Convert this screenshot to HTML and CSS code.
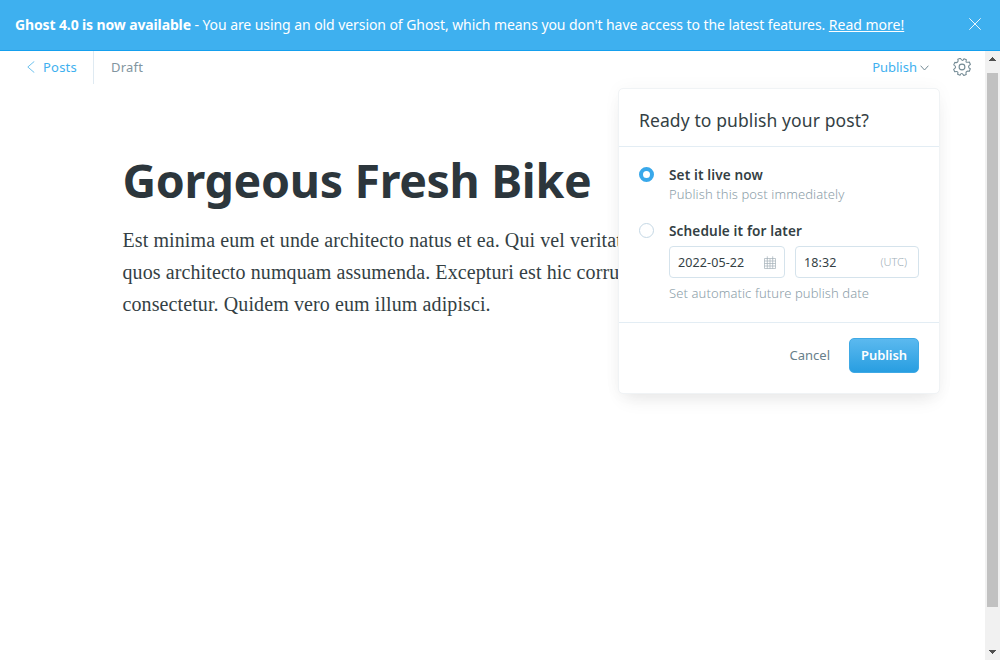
FILE: index.html
```html
<!DOCTYPE html>
<html lang="en">
<head>
<meta charset="utf-8">
<title>Editor</title>
<link rel="stylesheet" href="styles.css">
</head>
<body>
<aside class="banner">
  <p class="banner-text"><strong>Ghost 4.0 is now available</strong><span class="banner-copy"> - You are using an old version of Ghost, which means you don't have access to the latest features. </span><a class="banner-link">Read more!</a></p>
  <svg class="close" viewBox="0 0 12 12"><path d="M.3.3l11.4 11.4M11.7.3L.3 11.7"/></svg>
</aside>
<div class="viewport">
  <main class="editor">
    <header class="toolbar">
      <a class="back"><svg class="chevron-left" viewBox="0 0 8 12"><path d="M7.3.4L.8 6l6.5 5.6"/></svg><span class="posts">Posts</span></a>
      <span class="status">Draft</span>
      <div class="actions">
        <a class="publish-toggle"><span class="publish-label">Publish</span><svg class="chevron-down" viewBox="0 0 9 6"><path d="M.6.7l3.9 4.3L8.4.7"/></svg></a>
        <svg class="gear" viewBox="0 0 18 18"><circle cx="9" cy="9" r="2.9"/><path transform="rotate(22.5 9 9)" d="M7 2.8Q7.6 2.5 7.7.7h2.6Q10.400 2.500 11 2.800q.8.300 2.900-1.200l1.900 1.900Q14.500 5 14.900 6q.4 1.300 2.500 1.500v2.700q-2.100.300-2.500 1.500-.4 1 .9 2.700l-1.900 1.800q-1.900-1.400-2.700-1-.8.300-.9 2.100H7.700q-.1-1.800-.9-2.100-.8-.4-2.700 1l-1.900-1.800q1.300-1.700.9-2.700-.4-1.200-2.500-1.500V7.500Q2.700 7.300 3.100 6q.4-1-.9-2.500l1.900-1.900Q6.200 3.100 7 2.800z"/></svg>
      </div>
      <section class="popover">
        <h2 class="popover-title"><span>Ready to publish your post?</span></h2>
        <div class="options">
          <div class="option">
            <i class="radio radio-on"></i>
            <div class="option-body"><div class="label live">Set it live now</div><div class="hint now">Publish this post immediately</div></div>
          </div>
          <div class="option">
            <i class="radio"></i>
            <div class="option-body">
              <div class="label later">Schedule it for later</div>
              <div class="fields">
                <div class="field date"><span class="date-value">2022-05-22</span><svg class="calendar" viewBox="0 0 12 13"><path d="M.5 2.5h11v10H.5zM.5 5h11M.5 7.5h11M.5 10h11M3.3 2.5v10M6 2.5v10M8.7 2.5v10M3.3.3v3M8.7.3v3"/></svg></div>
                <div class="field time"><span class="time-value">18:32</span><span class="zone">(UTC)</span></div>
              </div>
              <div class="hint date-hint">Set automatic future publish date</div>
            </div>
          </div>
        </div>
        <footer class="popover-footer"><span class="cancel">Cancel</span><span class="button">Publish</span></footer>
      </section>
    </header>
    <article class="post">
      <h1 class="title">Gorgeous Fresh Bike</h1>
      <p class="copy">Est minima eum et unde architecto natus et ea. Qui vel veritatis<br>quos architecto numquam assumenda. Excepturi est hic corrupti<br>consectetur. Quidem vero eum illum adipisci.</p>
    </article>
  </main>
  <div class="scrollbar">
    <svg class="arrow" viewBox="0 0 7 4"><path d="M3 0h1v1h1v1h1v1h1v1H0V3h1V2h1V1h1z"/></svg>
    <div class="thumb"></div>
    <svg class="arrow arrow-down" viewBox="0 0 7 4"><path d="M0 0h7v1H6v1H5v1H4v1H3V3H2V2H1V1H0z"/></svg>
  </div>
</div>
</body>
</html>
```

FILE: styles.css
```css
* { box-sizing: border-box; }
body { margin: 0; height: 660px; overflow: hidden; display: flex; flex-direction: column; background: #fff; color: #343f44; font-family: "Noto Sans", "Open Sans", sans-serif; font-size: 13px; white-space: nowrap; }
h1, h2, p { margin: 0; }
svg { display: block; fill: none; flex: none; }
.banner { height: 51px; flex: none; display: flex; align-items: center; justify-content: space-between; padding: 0 19px 2px 15px; background: #3eb0ef; border-bottom: 1px solid #15a0ee; color: #fff; font-size: 14px; }
.banner-text { line-height: 20px; padding-top: 1px; }
.banner-text strong { font-weight: 700; letter-spacing: -.13px; }
.banner-copy { white-space: pre; letter-spacing: -.072px; }
.banner-link { text-decoration: underline; }
.close { width: 12px; height: 12px; stroke: #fff; stroke-width: .9; }
.viewport { flex: 1; display: flex; min-height: 0; }
.editor { flex: 1; min-width: 0; }
.toolbar { position: relative; height: 33px; display: flex; }
.back { width: 94px; padding: 0 0 1px 27px; display: flex; align-items: center; gap: 8px; border-right: 1px solid #dfeaf2; color: #3eb0ef; }
.posts { letter-spacing: .2px; }
.chevron-left { width: 8px; height: 12px; stroke: #6fc2ee; stroke-width: 1; }
.status { padding-left: 17px; line-height: 33px; color: #8295a0; letter-spacing: .2px; }
.actions { margin-left: auto; padding: 0 14px 1px 0; display: flex; align-items: center; }
.publish-toggle { display: flex; align-items: center; gap: 3px; margin-right: 24px; color: #3eb0ef; }
.chevron-down { width: 9px; height: 6px; stroke: #738a94; stroke-width: 1; margin-top: 2px; }
.gear { width: 18px; height: 18px; stroke: #738a94; stroke-width: 1.1; stroke-linejoin: round; }
.popover { position: absolute; left: 618px; top: 37px; width: 322px; height: 306px; display: flex; flex-direction: column; background: #fff; border: 1px solid #f0f3f5; border-radius: 5px; box-shadow: 0 10px 18px -6px rgba(0,0,0,.09), 0 0 18px rgba(0,0,0,.035); }
.popover-title { height: 58px; padding: 0 20px; border-bottom: 1px solid #e3edf4; font-size: 17.5px; line-height: 62px; font-weight: 400; letter-spacing: .1px; }
.options { height: 176px; padding: 18px 20px 0; border-bottom: 1px solid #e3edf4; display: flex; flex-direction: column; gap: 17px; }
.option { display: flex; gap: 15px; }
.radio { width: 15px; height: 15px; margin-top: 2px; flex: none; border: 1px solid #c5d8e5; border-radius: 50%; }
.radio-on { border: 4px solid #39a8ea; }
.option-body { flex: 1; }
.label { font-size: 13.6px; line-height: 20px; font-weight: 600; letter-spacing: .13px; }
.hint { line-height: 19px; font-weight: 300; color: #8c9ea9; letter-spacing: .1px; }
.fields { display: flex; gap: 10px; margin: 5px 0 6px; }
.field { height: 32px; padding: 0 8px; display: flex; align-items: center; justify-content: space-between; border: 1px solid #d5e3ec; border-radius: 4px; font-size: 12.5px; }
.date { width: 116px; }
.date-value, .time-value { letter-spacing: .1px; }
.time { width: 124px; padding-right: 11px; }
.calendar { width: 12px; height: 13px; stroke: #a4b0b7; stroke-width: .7; }
.zone { color: #9fafb8; font-size: 11px; font-weight: 300; padding-bottom: 1px; }
.popover-footer { display: flex; align-items: center; justify-content: flex-end; padding: 15px 20px 0; gap: 19px; }
.cancel { color: #68808b; padding-bottom: 2px; }
.button { width: 70px; height: 35px; line-height: 33px; text-align: center; border: 1px solid #3fa9e5; border-radius: 5px; background: linear-gradient(#5bb9ef, #289ee1); color: #fff; font-weight: 600; letter-spacing: -.1px; }
.post { padding: 68px 0 0 122.5px; }
.title { font-size: 46.5px; line-height: 56px; font-weight: 700; color: #2c363c; letter-spacing: -.33px; }
.copy { margin-top: 16px; font-family: "Liberation Serif", serif; font-size: 20px; line-height: 32px; letter-spacing: .1px; }
.scrollbar { width: 15px; flex: none; background: #f1f1f1; display: flex; flex-direction: column; align-items: center; padding: 6px 0; }
.arrow { width: 7px; height: 4px; fill: #505050; }
.thumb { width: 11px; height: 534px; margin-top: 12px; background: #c1c1c1; }
.arrow-down { margin-top: auto; }
```
